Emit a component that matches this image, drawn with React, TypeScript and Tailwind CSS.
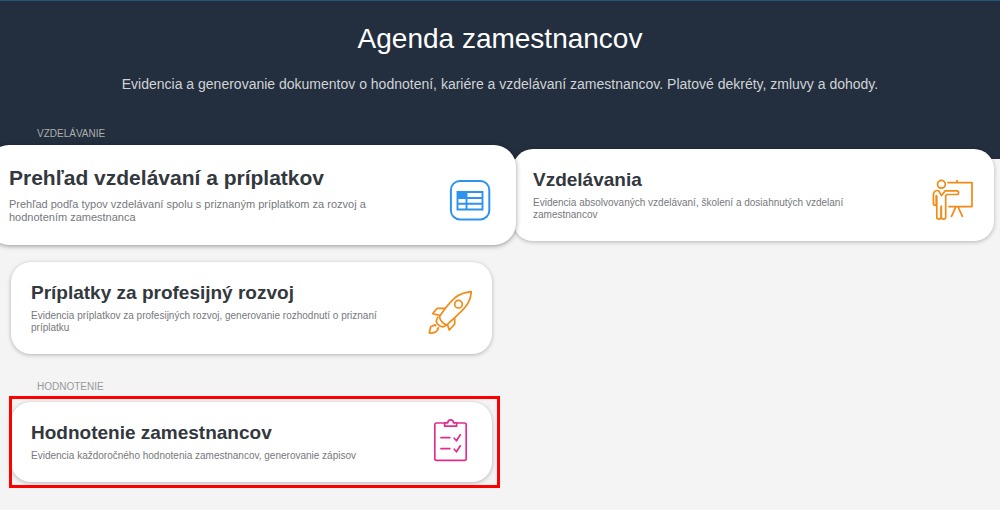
import React from "react";

const TableIcon = () => (
  <svg viewBox="0 0 48 48" fill="none" stroke="#2e93ee" className="-mt-1 size-12 shrink-0">
    <rect x="4.900" y="5" width="38.400" height="38.400" rx="9" strokeWidth="2" />
    <path d="M11.500 16h25v17.500h-25zM11.500 22h25M11.500 27.700h25M20.500 16v17.500" strokeWidth="1.900" />
    <path d="M11 15.500h9.500V22H11z" fill="#2e93ee" stroke="none" />
  </svg>
);

const TeachingIcon = () => (
  <svg
    viewBox="0 0 44 44"
    fill="none"
    stroke="#f28a16"
    strokeWidth="1.700"
    strokeLinecap="round"
    strokeLinejoin="round"
    className="-mt-1 size-11 shrink-0"
  >
    <circle cx="11.400" cy="7.300" r="3.900" />
    <path d="M18 5.600h24v24H19M27 5.400V3.600M25.700 30.200l-4.200 9.200M28.200 30.200l4.200 9.200" />
    <path d="M7.200 13.500c-2.400.3-3.800 2-3.800 4.500v9c0 1.700 2.800 1.700 2.800 0v-8.500M6.800 19v21.300c0 2.300 4.200 2.300 4.200 0V30M11.300 29v11.300c0 2.300 4.400 2.300 4.400 0V18.800l1-1.300h10.200c2.300 0 2.300-3.600 0-3.600H15.200L11.500 18.500 8.500 13.600" />
  </svg>
);

const RocketIcon = () => (
  <svg
    viewBox="0 0 44 44"
    fill="none"
    stroke="#f28a16"
    strokeWidth="1.700"
    strokeLinejoin="round"
    className="-mt-1 size-11 shrink-0"
  >
    <path d="M11.500 26.500C16.500 19 21.500 12.300 27.500 7.300 32 4 37 2.300 43.200 1.700 43 7.500 41.500 11.500 37.500 16.800 33 22.500 25 29 19 35c-3.500-.8-7.500-4.800-7.500-8.500z" />
    <circle cx="30.500" cy="14.200" r="3.800" />
    <path d="M17 18.300H9.200L4.700 23.600l7.300 1.900M26.700 28.300V34l-5.400 6-1.700-5M9.900 26.800l-1.700 4.400c1 3.100 3.300 5.100 6.600 5.700L19 35" />
    <path d="M7.700 34.500l-5 2.200L1.300 43c3.200.3 8.400-.6 8.700-4.200M7.700 34.500l-.5 2M9 39l2-1.700" />
  </svg>
);

const ChecklistIcon = () => (
  <svg
    viewBox="0 0 44 44"
    fill="none"
    stroke="#e12d8c"
    strokeWidth="1.700"
    strokeLinecap="round"
    strokeLinejoin="round"
    className="-mt-1 size-11 shrink-0"
  >
    <path d="M16.500 5H8.500c-1 0-1.700.7-1.700 1.700v34c0 1 .7 1.600 1.700 1.600h28c1 0 1.700-.6 1.700-1.600v-34c0-1-.7-1.700-1.700-1.700h-7.500" />
    <path d="M16.600 4.800v3.400h12V4.800h-3.100c0-4-5.700-4-5.700 0z" />
    <path d="M13 19.700h8.800M13 30.700h8.800M26.200 20.200l2.300 2.600 3.800-6M26.200 31.200l2.300 2.600 3.800-6" />
  </svg>
);

const Card = ({
  title,
  text,
  icon,
  active = false,
}: {
  title: string;
  text: string;
  icon: React.ReactNode;
  active?: boolean;
}) => {
  return (
    <a
      href="#"
      className={
        active
          ? "relative z-10 -mx-6 -my-1 flex items-end gap-5 rounded-[22px] bg-white px-[22px] py-[21px] shadow-[0_1px_5px_#00000066]"
          : "flex items-end gap-5 rounded-[20px] bg-white px-5 py-5 shadow-[0_1px_4px_#00000044]"
      }
    >
      <div className="flex-1 self-start">
        <h3
          className={
            active
              ? "mb-2 text-[21px] leading-6 font-bold text-[#32383e]"
              : "mb-1.5 text-[19px] leading-[22px] font-bold text-[#32383e]"
          }
        >
          {title}
        </h3>
        <p
          className={
            active
              ? "text-[11px] leading-[13px] text-[#75797d]"
              : "text-[10px] leading-3 text-[#75797d]"
          }
        >
          {text}
        </p>
      </div>
      {icon}
    </a>
  );
};

const App = () => {
  return (
    <div className="min-h-screen bg-[#f4f4f4] font-['Liberation_Sans',Arial,sans-serif]">
      <header className="border-t border-[#21557f] bg-[#232f3e] px-4 pt-[22px] pb-[66px] text-center">
        <h1 className="text-[28px] leading-8 text-white">Agenda zamestnancov</h1>
        <p className="mt-5 text-sm leading-[18px] text-[#d0d3d6]">
          Evidencia a generovanie dokumentov o hodnotení, kariére a vzdelávaní
          zamestnancov. Platové dekréty, zmluvy a dohody.
        </p>
      </header>
      <main className="-mt-8 overflow-x-clip pr-1.5 pb-6 pl-[11px]">
        <section>
          <h2 className="mb-2 pl-[26px] text-[10px] leading-[14px] text-[#adadad]">
            VZDELÁVANIE
          </h2>
          <div className="grid grid-cols-2 gap-x-[21px] gap-y-[21px]">
            <Card
              active
              title="Prehľad vzdelávaní a príplatkov"
              text="Prehľad podľa typov vzdelávaní spolu s priznaným príplatkom za rozvoj a hodnotením zamestnanca"
              icon={<TableIcon />}
            />
            <Card
              title="Vzdelávania"
              text="Evidencia absolvovaných vzdelávaní, školení a dosiahnutých vzdelaní zamestnancov"
              icon={<TeachingIcon />}
            />
            <Card
              title="Príplatky za profesijný rozvoj"
              text="Evidencia príplatkov za profesijných rozvoj, generovanie rozhodnutí o priznaní príplatku"
              icon={<RocketIcon />}
            />
          </div>
        </section>
        <section className="mt-[26px]">
          <h2 className="mb-2 pl-[26px] text-[10px] leading-[14px] text-[#999999]">
            HODNOTENIE
          </h2>
          <div className="grid grid-cols-2 gap-x-[21px]">
            <div className="relative">
              <Card
                title="Hodnotenie zamestnancov"
                text="Evidencia každoročného hodnotenia zamestnancov, generovanie zápisov"
                icon={<ChecklistIcon />}
              />
              <div className="pointer-events-none absolute -top-1.5 -right-2 -bottom-1.5 -left-0.5 border-3 border-[#ff0000]" />
            </div>
          </div>
        </section>
      </main>
    </div>
  );
};

export default App;
